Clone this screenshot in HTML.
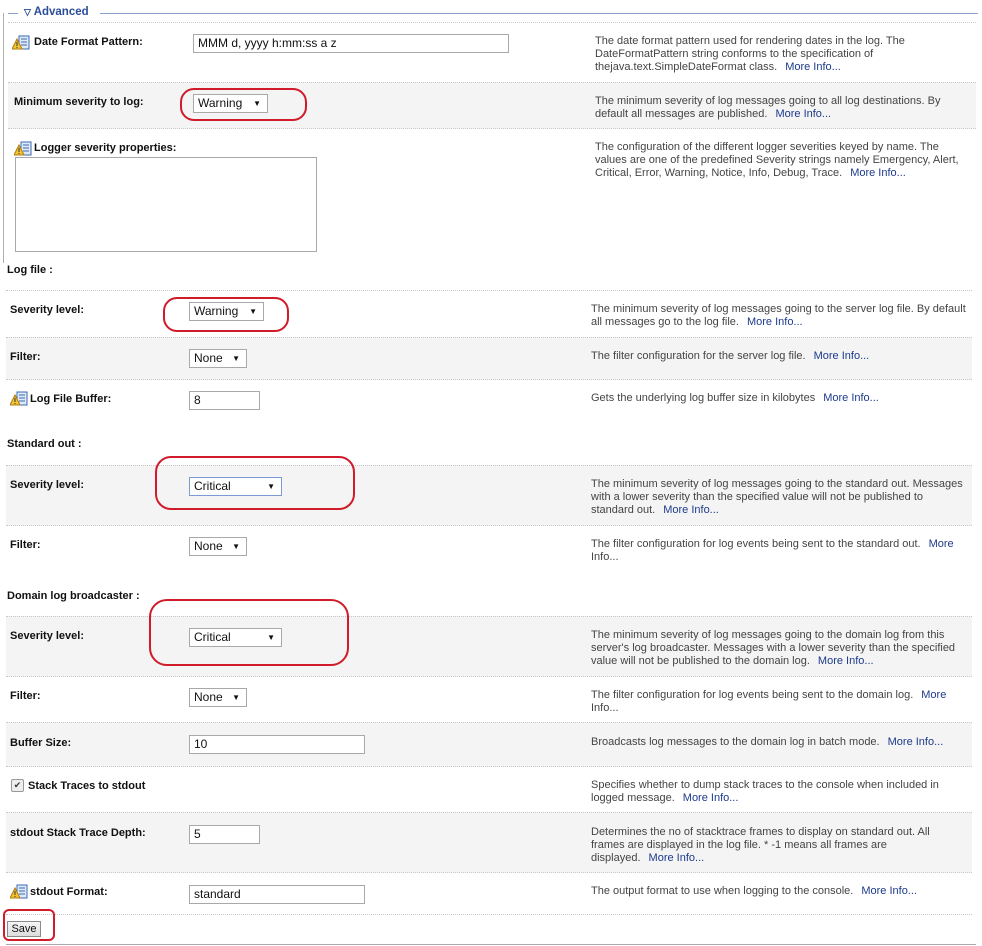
<!DOCTYPE html>
<html><head><meta charset="utf-8"><style>
body{margin:0;width:982px;height:946px;background:#fff;position:relative;overflow:hidden;font-family:"Liberation Sans",Tahoma,sans-serif;font-size:11px;color:#333}
.a{position:absolute}
.row{position:absolute;left:6px;width:966px;border-top:1px dotted #c8c8c8}
.g{background:#f4f4f4}
.lb{position:absolute;font-weight:bold;color:#111;font-size:11px;white-space:nowrap;margin-top:2px}
.ds{position:absolute;line-height:13px;font-size:11px;color:#444;white-space:nowrap;margin-top:1px}
.ds a{color:#1c3a8c;text-decoration:none;margin-left:8px}
.sel,.inp{position:absolute;border:1px solid #a9a9a9;background:#fff;height:17px;box-sizing:border-box;font-size:12px;line-height:17px;padding-left:4px;color:#111}
.sel:after{content:"▼";position:absolute;right:6px;top:0;font-size:8px}
.oval{position:absolute;border:2.5px solid #d01c2a;border-radius:14px}
.sec{position:absolute;left:7px;font-weight:bold;color:#111}
.ic{position:absolute;width:18px;height:16px}
</style></head><body>
<svg width="0" height="0" style="position:absolute"><defs><symbol id="i" viewBox="0 0 18 16"><rect x="7" y="1" width="10" height="13" fill="#dfe9f7" stroke="#3a6ab0"/><line x1="9" y1="4" x2="15" y2="4" stroke="#3a6ab0"/><line x1="9" y1="7" x2="15" y2="7" stroke="#3a6ab0"/><line x1="9" y1="10" x2="15" y2="10" stroke="#3a6ab0"/><path d="M5 4 L10 14 L0 14 Z" fill="#f2c530" stroke="#b07a10"/><rect x="4.5" y="7" width="1" height="4" fill="#333"/><rect x="4.5" y="12" width="1" height="1" fill="#333"/></symbol></defs></svg>

<div class="a" style="left:3px;top:13px;width:1px;height:250px;background:#b0b0b0"></div>
<div class="a" style="left:8px;top:13px;width:10px;height:1px;background:#8aa0c8"></div>
<div class="a" style="left:100px;top:13px;width:878px;height:1px;background:#8aa0c8"></div>
<div class="a" style="left:24px;top:6px;font-weight:bold;color:#2a4d9a;font-size:11.5px"><span style="font-size:9px">▽</span> Advanced</div>

<div class="row" style="left:8px;width:968px;top:22px;height:60px">
<svg class="ic" style="left:4px;top:12px"><use href="#i"/></svg>
<div class="lb" style="left:26px;top:11px">Date Format Pattern:</div>
<div class="inp" style="left:185px;top:11px;width:316px;height:19px">MMM d, yyyy h:mm:ss a z</div>
<div class="ds" style="left:587px;top:11px">The date format pattern used for rendering dates in the log. The<br>DateFormatPattern string conforms to the specification of<br>thejava.text.SimpleDateFormat class.<a>More Info...</a></div>
</div>
<div class="row g" style="left:8px;width:968px;top:82px;height:46px">
<div class="lb" style="left:6px;top:11px">Minimum severity to log:</div>
<div class="sel" style="left:185px;top:11px;width:75px;height:19px">Warning</div>
<div class="ds" style="left:587px;top:11px">The minimum severity of log messages going to all log destinations. By<br>default all messages are published.<a>More Info...</a></div>
</div>
<div class="row" style="left:8px;width:968px;top:128px;height:130px">
<svg class="ic" style="left:6px;top:12px"><use href="#i"/></svg>
<div class="lb" style="left:26px;top:11px">Logger severity properties:</div>
<div class="a" style="left:7px;top:28px;width:302px;height:95px;border:1px solid #a9a9a9;box-sizing:border-box"></div>
<div class="ds" style="left:587px;top:11px">The configuration of the different logger severities keyed by name. The<br>values are one of the predefined Severity strings namely Emergency, Alert,<br>Critical, Error, Warning, Notice, Info, Debug, Trace.<a>More Info...</a></div>
</div>
<div class="oval" style="left:180px;top:88px;width:123px;height:29px"></div>

<div class="sec" style="top:264px">Log file :</div>
<div class="row" style="top:290px;height:47px">
<div class="lb" style="left:4px;top:11px">Severity level:</div>
<div class="sel" style="left:183px;top:11px;width:75px;height:19px">Warning</div>
<div class="ds" style="left:585px;top:11px">The minimum severity of log messages going to the server log file. By default<br>all messages go to the log file.<a>More Info...</a></div>
</div>
<div class="row g" style="top:337px;height:42px">
<div class="lb" style="left:4px;top:11px">Filter:</div>
<div class="sel" style="left:183px;top:11px;width:58px;height:19px">None</div>
<div class="ds" style="left:585px;top:11px">The filter configuration for the server log file.<a>More Info...</a></div>
</div>
<div class="row" style="top:379px;height:41px">
<svg class="ic" style="left:4px;top:11px"><use href="#i"/></svg>
<div class="lb" style="left:24px;top:11px">Log File Buffer:</div>
<div class="inp" style="left:183px;top:11px;width:71px;height:19px">8</div>
<div class="ds" style="left:585px;top:11px">Gets the underlying log buffer size in kilobytes<a>More Info...</a></div>
</div>
<div class="oval" style="left:163px;top:297px;width:122px;height:31px"></div>

<div class="sec" style="top:438px">Standard out :</div>
<div class="row g" style="top:465px;height:60px">
<div class="lb" style="left:4px;top:11px">Severity level:</div>
<div class="sel" style="left:183px;top:11px;width:93px;height:19px;border-color:#7a9cd3">Critical</div>
<div class="ds" style="left:585px;top:11px">The minimum severity of log messages going to the standard out. Messages<br>with a lower severity than the specified value will not be published to<br>standard out.<a>More Info...</a></div>
</div>
<div class="row" style="top:525px;height:45px">
<div class="lb" style="left:4px;top:11px">Filter:</div>
<div class="sel" style="left:183px;top:11px;width:58px;height:19px">None</div>
<div class="ds" style="left:585px;top:11px">The filter configuration for log events being sent to the standard out.<a>More</a><br>Info...</div>
</div>
<div class="oval" style="left:155px;top:456px;width:196px;height:50px;border-radius:16px"></div>

<div class="sec" style="top:590px">Domain log broadcaster :</div>
<div class="row g" style="top:616px;height:60px">
<div class="lb" style="left:4px;top:11px">Severity level:</div>
<div class="sel" style="left:183px;top:11px;width:93px;height:19px">Critical</div>
<div class="ds" style="left:585px;top:11px">The minimum severity of log messages going to the domain log from this<br>server's log broadcaster. Messages with a lower severity than the specified<br>value will not be published to the domain log.<a>More Info...</a></div>
</div>
<div class="row" style="top:676px;height:46px">
<div class="lb" style="left:4px;top:11px">Filter:</div>
<div class="sel" style="left:183px;top:11px;width:58px;height:19px">None</div>
<div class="ds" style="left:585px;top:11px">The filter configuration for log events being sent to the domain log.<a>More</a><br>Info...</div>
</div>
<div class="row g" style="top:722px;height:44px">
<div class="lb" style="left:4px;top:12px">Buffer Size:</div>
<div class="inp" style="left:183px;top:12px;width:176px;height:19px">10</div>
<div class="ds" style="left:585px;top:12px">Broadcasts log messages to the domain log in batch mode.<a>More Info...</a></div>
</div>
<div class="row" style="top:766px;height:46px">
<div class="a" style="left:5px;top:12px;width:11px;height:11px;border:1px solid #999;border-radius:2px;background:#eee;font-size:9px;line-height:11px;text-align:center">✔</div>
<div class="lb" style="left:22px;top:11px">Stack Traces to stdout</div>
<div class="ds" style="left:585px;top:11px">Specifies whether to dump stack traces to the console when included in<br>logged message.<a>More Info...</a></div>
</div>
<div class="row g" style="top:812px;height:60px">
<div class="lb" style="left:4px;top:12px">stdout Stack Trace Depth:</div>
<div class="inp" style="left:183px;top:12px;width:71px;height:19px">5</div>
<div class="ds" style="left:585px;top:12px">Determines the no of stacktrace frames to display on standard out. All<br>frames are displayed in the log file. * -1 means all frames are<br>displayed.<a>More Info...</a></div>
</div>
<div class="row" style="top:872px;height:42px">
<svg class="ic" style="left:4px;top:11px"><use href="#i"/></svg>
<div class="lb" style="left:24px;top:11px">stdout Format:</div>
<div class="inp" style="left:183px;top:12px;width:176px;height:19px">standard</div>
<div class="ds" style="left:585px;top:11px">The output format to use when logging to the console.<a>More Info...</a></div>
</div>
<div class="row" style="top:914px;height:0"></div>
<div class="oval" style="left:149px;top:599px;width:196px;height:63px;border-radius:18px"></div>

<div class="a" style="left:7px;top:921px;width:34px;height:16px;border:1px solid #8a8a8a;background:linear-gradient(#f6f6f6,#dcdcdc);box-sizing:border-box;font-size:11px;line-height:14px;text-align:center;color:#111">Save</div>
<div class="oval" style="left:3px;top:909px;width:48px;height:28px;border-radius:6px"></div>
<div class="a" style="left:6px;top:944px;width:970px;height:1px;background:#aaa"></div>
</body></html>
